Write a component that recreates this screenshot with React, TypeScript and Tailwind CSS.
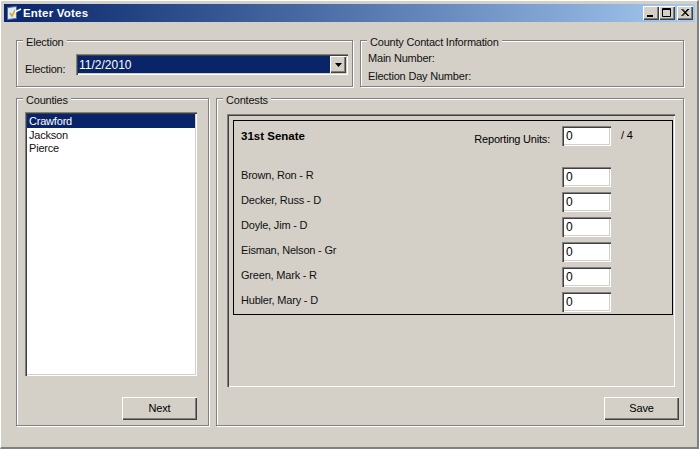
import type { ReactNode } from 'react'

const candidates = [
  'Brown, Ron - R',
  'Decker, Russ - D',
  'Doyle, Jim - D',
  'Eisman, Nelson - Gr',
  'Green, Mark - R',
  'Hubler, Mary - D',
]

const counties = ['Crawford', 'Jackson', 'Pierce']

const raised =
  'shadow-[inset_1px_1px_0_#fff,inset_-1px_-1px_0_#404040,inset_-2px_-2px_0_#808080]'
const sunken =
  'shadow-[inset_1px_1px_0_#808080,inset_2px_2px_0_#404040,inset_-1px_-1px_0_#fff,inset_-2px_-2px_0_#d4d0c8]'

interface IGroupBox {
  title: string
  className: string
  children: ReactNode
}

const GroupBox = ({ title, className, children }: IGroupBox) => (
  <div
    className={`relative border border-[#808080] shadow-[inset_1px_1px_0_#fff,1px_1px_0_#fff] ${className}`}
  >
    <span className="absolute -top-[6px] left-[6px] bg-[#d4d0c8] px-[3px] leading-[14px]">
      {title}
    </span>
    {children}
  </div>
)

const VoteInput = ({ value }: { value: string }) => (
  <div
    className={`w-[49px] h-[20px] bg-white pl-[4px] leading-[20px] text-[12px] text-black ${sunken}`}
  >
    {value}
  </div>
)

const PushButton = ({ label }: { label: string }) => (
  <div
    className={`w-[75px] h-[23px] flex items-center justify-center text-black ${raised}`}
  >
    {label}
  </div>
)

const CaptionButton = ({ children, className }: { children: ReactNode; className?: string }) => (
  <div
    className={`w-[16px] h-[14px] bg-[#d4d0c8] flex items-center justify-center ${raised} ${className ?? ''}`}
  >
    <svg width="16" height="14" viewBox="0 0 16 14">
      {children}
    </svg>
  </div>
)

const App = () => {
  return (
    <div className="w-[699px] h-[449px] bg-[#d4d0c8] overflow-hidden text-[11px] tracking-[-0.2px] text-[#111] font-['Liberation_Sans',sans-serif] border-t border-l border-white border-b-2 border-r-2 border-b-[#808080] border-r-[#808080]">
      <div className="mt-[3px] ml-[3px] mr-[2px] h-[18px] flex items-center bg-gradient-to-r from-[#0a246a] to-[#a6caf0]">
        <svg width="16" height="16" viewBox="0 0 16 16" className="ml-[2px] shrink-0">
          <path d="M1.5 2.5 L10.5 1.5 V13.5 L1.5 14.5 Z" fill="#dfe8f5" stroke="#3f6fa8" />
          <path d="M4 8 L6 11 L9 5" fill="none" stroke="#d9a520" strokeWidth="1.5" />
          <path d="M9 7 L15 4" stroke="#fff" strokeWidth="1.5" />
        </svg>
        <span className="ml-[1px] pt-[1px] font-bold text-white text-[11.5px] tracking-[0.2px]">
          Enter Votes
        </span>
        <div className="ml-auto mr-[2px] flex">
          <CaptionButton>
            <rect x="4" y="9" width="6" height="2" fill="#000" />
          </CaptionButton>
          <CaptionButton>
            <path d="M3.5 2.5 H11.5 V10.5 H3.5 Z" fill="none" stroke="#000" />
            <path d="M3 3.5 H12" stroke="#000" />
          </CaptionButton>
          <CaptionButton className="ml-[2px]">
            <path d="M4.5 3 L11 10 M5.5 3 L12 10 M11 3 L4.5 10 M12 3 L5.5 10" stroke="#000" />
          </CaptionButton>
        </div>
      </div>

      <div className="mt-[18px] ml-[15px] flex gap-[7px]">
        <GroupBox title="Election" className="w-[337px] h-[47px]">
          <div className="flex items-start mt-[13px] ml-[8px]">
            <span className="w-[51px] mt-[8px] leading-[14px]">Election:</span>
            <div className={`w-[272px] h-[21px] p-[2px] flex bg-white ${sunken}`}>
              <div className="flex-1 bg-[#0a246a] text-white text-[12px] tracking-normal pl-[1px] pt-[1px] leading-[17px]">
                11/2/2010
              </div>
              <div className={`w-[16px] bg-[#d4d0c8] flex items-center justify-center ${raised}`}>
                <svg width="7" height="4" viewBox="0 0 7 4">
                  <path d="M0 0 H7 L3.5 4 Z" fill="#000" />
                </svg>
              </div>
            </div>
          </div>
        </GroupBox>
        <GroupBox title="County Contact Information" className="w-[324px] h-[47px]">
          <div className="ml-[7px] mt-[10px] flex flex-col gap-[4px] leading-[14px]">
            <span>Main Number:</span>
            <span>Election Day Number:</span>
          </div>
        </GroupBox>
      </div>

      <div className="mt-[11px] ml-[15px] flex gap-[7px]">
        <GroupBox title="Counties" className="w-[193px] h-[328px]">
          <div className={`ml-[8px] mt-[13px] w-[172px] h-[264px] bg-white pt-[2px] px-[2px] ${sunken}`}>
            {counties.map((county, i) => (
              <div
                key={county}
                className={`h-[13.5px] pl-[2px] leading-[14px] ${i === 0 ? 'bg-[#0a246a] text-white' : ''}`}
              >
                {county}
              </div>
            ))}
          </div>
          <div className="flex justify-end mt-[21px] mr-[11px]">
            <PushButton label="Next" />
          </div>
        </GroupBox>

        <GroupBox title="Contests" className="w-[468px] h-[328px]">
          <div className="ml-[10px] mt-[15px] w-[448px] h-[273px] pt-[6px] pl-[6px] shadow-[inset_1px_1px_0_#808080,inset_2px_2px_0_#404040,inset_-1px_-1px_0_#fff]">
            <div className="relative w-[440px] h-[195px] border border-black pl-[7px] pr-[61px]">
              <div className="h-[46px] flex items-start text-black">
                <span className="mt-[7px] font-bold text-[11.5px] tracking-normal">31st Senate</span>
                <span className="ml-auto mt-[10px] mr-[12px]">Reporting Units:</span>
                <div className="mt-[5px]">
                  <VoteInput value="0" />
                </div>
                <span className="absolute left-[387px] top-[6px]">/ 4</span>
              </div>
              <div className="flex flex-col gap-[5px]">
                {candidates.map((candidate) => (
                  <div key={candidate} className="h-[20px] flex justify-between">
                    <span className="mt-[1px] leading-[14px]">{candidate}</span>
                    <VoteInput value="0" />
                  </div>
                ))}
              </div>
            </div>
          </div>
          <div className="flex justify-end mt-[10px] mr-[4px]">
            <PushButton label="Save" />
          </div>
        </GroupBox>
      </div>
    </div>
  )
}

export default App
